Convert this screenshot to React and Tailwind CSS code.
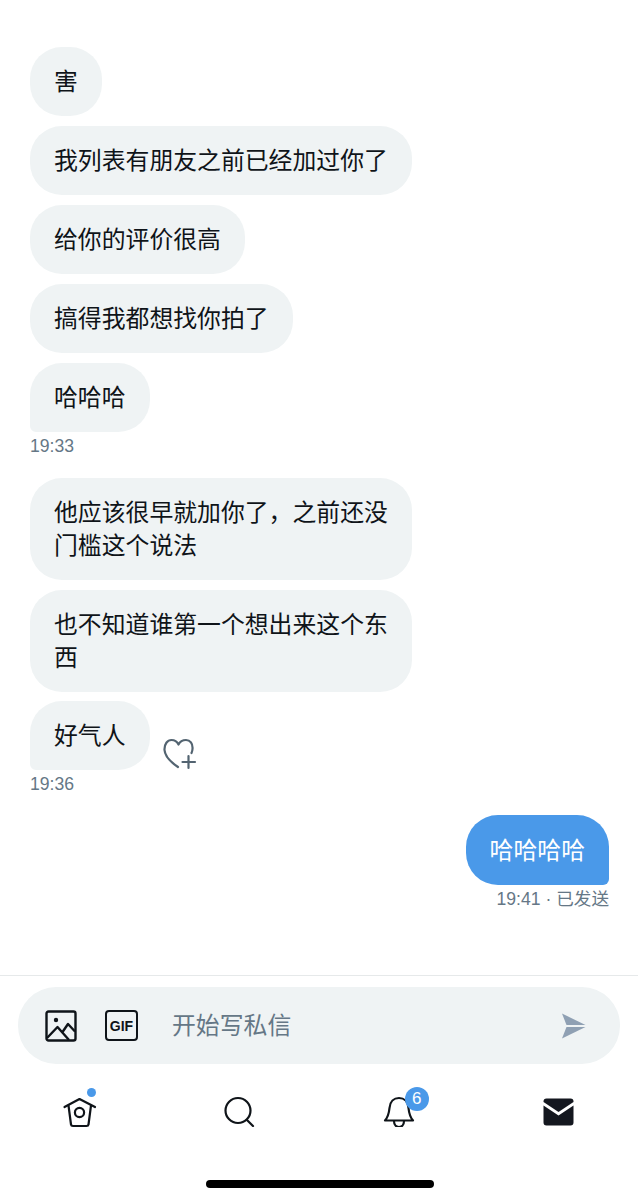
const FONT = "font-['Liberation_Sans','Noto_Sans_CJK_SC',sans-serif]";

function Bubble({ text, last, width, children }) {
  return (
    <div className="flex items-end">
      <div
        className={`bg-[#eff3f4] text-[#0f1419] rounded-[32px] px-6 pt-[18px] pb-[18px] text-[23.85px] leading-[33px] ${width || ''} ${last ? 'rounded-bl-[6px]' : ''}`}
      >
        {text}
      </div>
      {children}
    </div>
  );
}

function Time({ children }) {
  return <div className="text-[#657786] text-[17.6px] leading-[20px] mt-[4px]">{children}</div>;
}

export default function App() {
  return (
    <div className={`${FONT} w-[638px] h-[1200px] bg-white flex flex-col overflow-hidden`}>
      <div className="h-[975px] pt-[47px] pl-[30px] pr-[29px] flex flex-col">
        <div className="flex flex-col items-start gap-[10px]">
          <Bubble text="害" />
          <Bubble text="我列表有朋友之前已经加过你了" />
          <Bubble text="给你的评价很高" />
          <Bubble text="搞得我都想找你拍了" />
          <Bubble text="哈哈哈" last />
        </div>
        <Time>19:33</Time>
        <div className="flex flex-col items-start gap-[9.5px] mt-[22px]">
          <Bubble text="他应该很早就加你了，之前还没门槛这个说法" width="w-[382px]" />
          <Bubble text="也不知道谁第一个想出来这个东西" width="w-[382px]" />
          <Bubble text="好气人" last>
            <svg className="ml-[12px] -mb-[1px]" width="36" height="34" viewBox="0 0 36 34" fill="none" stroke="#536471" strokeWidth="2.2" strokeLinecap="round" strokeLinejoin="round">
              <path d="M16 30 C10 26 3 20 2.5 13 C2.2 7 5.5 3 9.5 3 C12.5 3 15 4.5 16.5 7.5 C18 4.5 20.5 3 24 3 C28 3 31 6.5 30.5 12 C30.4 13.5 30 15 29.5 16" />
              <path d="M26.5 19 V31 M20.5 25 H33" />
            </svg>
          </Bubble>
        </div>
        <Time>19:36</Time>
        <div className="flex flex-col items-end mt-[21px]">
          <div className="bg-[#4a99e9] text-white rounded-[32px] rounded-br-[6px] px-6 pt-[19px] pb-[18px] text-[23.85px] leading-[33px]">
            哈哈哈哈
          </div>
          <div className="text-[#657786] text-[17.6px] leading-[20px] mt-[4px]">19:41 · 已发送</div>
        </div>
      </div>

      <div className="border-t border-[#e6e9ea] pt-[11px] px-[18px]">
        <div className="h-[77px] rounded-[38px] bg-[#eff3f4] flex items-center pl-[27px] pr-[34px]">
          <svg width="32" height="32" viewBox="0 0 32 32" fill="none" stroke="#0f1419" strokeWidth="2.4" strokeLinejoin="round">
            <rect x="1.5" y="1.5" width="29" height="29" rx="2" />
            <circle cx="11" cy="10" r="2.2" fill="#0f1419" stroke="none" />
            <path d="M2 28 L12.5 17 L24 30 M17.5 22 L23 14 L30 21.5" />
          </svg>
          <div className="ml-[28px] w-[33px] h-[31px] border-[2.6px] border-[#0f1419] rounded-[4px] flex items-center justify-center text-[14px] font-bold text-[#0f1419] leading-none">
            GIF
          </div>
          <div className="ml-[34px] text-[23.85px] text-[#657786] flex-1">开始写私信</div>
          <svg width="25" height="26" viewBox="0 0 25 26" fill="#8fa0b3">
            <path d="M1 0.5 L24.5 12 H5.5 Z" />
            <path d="M1 25.5 L24.5 14 H5.5 Z" />
          </svg>
        </div>

        <div className="h-[116px] -mx-[18px] flex items-start">
          <div className="w-[159.5px] flex justify-center pt-[32px]">
            <div className="relative">
              <svg width="34" height="32" viewBox="0 0 34 32" fill="none" stroke="#0f1419" strokeWidth="2.2" strokeLinecap="round" strokeLinejoin="round">
                <path d="M1.5 11 L16.5 3 L32 11" />
                <path d="M5.5 9.5 L8 28.5 Q8.2 30 10 30 H23.5 Q25.3 30 25.5 28.5 L28 9.5" />
                <circle cx="16.5" cy="16.5" r="4.6" />
              </svg>
              <div className="absolute w-[9px] h-[9px] rounded-full bg-[#4a99e9] -top-[8px] left-[24px]" />
            </div>
          </div>
          <div className="w-[159.5px] flex justify-center pt-[32px] pl-[1px]">
            <svg width="32" height="31" viewBox="0 0 32 31" fill="none" stroke="#0f1419" strokeWidth="2.2" strokeLinecap="round">
              <circle cx="14" cy="14.5" r="12.5" />
              <path d="M23 24 L29 30" />
            </svg>
          </div>
          <div className="w-[159.5px] flex justify-center pt-[32px]">
            <div className="relative">
              <svg width="32" height="31" viewBox="0 0 32 31" fill="none" stroke="#0f1419" strokeWidth="2.2" strokeLinecap="round" strokeLinejoin="round">
                <path d="M2 24.5 H30 C27 21 26 17 25.5 12 C25 5.5 21 2 16 2 C11 2 7 5.5 6.5 12 C6 17 5 21 2 24.5 Z" />
                <path d="M11 25 C11 33 21 33 21 25" />
              </svg>
              <div className="absolute w-[24px] h-[24px] rounded-full bg-[#4a99e9] text-white text-[17px] leading-[24px] text-center -top-[9px] left-[22px]">
                6
              </div>
            </div>
          </div>
          <div className="w-[159.5px] flex justify-center pt-[33px]">
            <svg width="31" height="28" viewBox="0 0 31 28" className="mt-[1px]">
              <path d="M0.5 3.5 Q0.5 0.5 3.5 0.5 H27.5 Q30.5 0.5 30.5 3.5 V4 L15.5 14 L0.5 4 Z" fill="#14171f" />
              <path d="M0.5 7.5 L15.5 17.5 L30.5 7.5 V24.5 Q30.5 27.5 27.5 27.5 H3.5 Q0.5 27.5 0.5 24.5 Z" fill="#14171f" />
            </svg>
          </div>
        </div>
      </div>

      <div className="flex justify-center pl-[2px]">
        <div className="w-[228px] h-[8px] rounded-full bg-black" />
      </div>
    </div>
  );
}
